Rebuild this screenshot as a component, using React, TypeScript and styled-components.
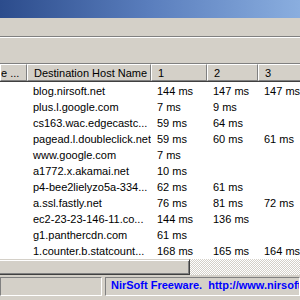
import React from "react";
import styled, { createGlobalStyle } from "styled-components";

const Global = createGlobalStyle`
  html, body { margin: 0; padding: 0; background: #d4d0c8; }
  body { width: 300px; height: 300px; overflow: hidden; }
  #root { width: 300px; height: 300px; }
`;

const Window = styled.div`
  width: 300px;
  height: 300px;
  display: flex;
  flex-direction: column;
  background: #d4d0c8;
  font-family: Tahoma, "Liberation Sans", Arial, sans-serif;
  font-size: 11px;
  color: #000;
  overflow: hidden;
`;

const TitleBar = styled.div`
  height: 18px;
  flex: none;
  background: linear-gradient(90deg, #2c4c8c 0%, #5a7ebd 50%, #8aaedf 100%);
`;

const MenuBar = styled.div`
  height: 18px;
  flex: none;
  border-bottom: 1px solid #808080;
  box-shadow: 0 1px 0 #ffffff;
  margin-bottom: 1px;
`;

const Toolbar = styled.div`
  height: 25px;
  flex: none;
`;

const ListView = styled.div`
  flex: none;
  border-top: 1px solid #808080;
  display: flex;
  flex-direction: column;
  background: #fff;
  overflow: hidden;
`;

const Header = styled.div`
  display: flex;
  height: 17px;
  background: #d4d0c8;
  flex: none;
`;

const HeaderCell = styled.div<{ $w: number; $pad?: number }>`
  flex: none;
  width: ${(p) => p.$w}px;
  box-sizing: border-box;
  height: 17px;
  padding-left: ${(p) => (p.$pad ?? 6)}px;
  line-height: 16px;
  white-space: nowrap;
  overflow: hidden;
  border-top: 1px solid #fff;
  border-left: 1px solid #fff;
  border-right: 1px solid #808080;
  border-bottom: 1px solid #808080;
  box-shadow: 1px 0 0 #404040, 0 1px 0 #404040;
`;

const Body = styled.div`
  padding-top: 2px;
  display: flex;
  flex-direction: column;
`;

const Row = styled.div`
  display: flex;
  height: 16px;
  line-height: 16px;
`;

const Cell = styled.div<{ $w: number }>`
  flex: none;
  width: ${(p) => p.$w}px;
  box-sizing: border-box;
  padding-left: 6px;
  white-space: nowrap;
  overflow: hidden;
`;

const ScrollBar = styled.div`
  height: 16px;
  flex: none;
  display: flex;
  background-color: #d4d0c8;
  background-image: conic-gradient(#ffffff 25%, #d4d0c8 0 50%, #ffffff 0 75%, #d4d0c8 0);
  background-size: 2px 2px;
`;

const Thumb = styled.div`
  width: 190px;
  box-sizing: border-box;
  background: #d4d0c8;
  border-top: 1px solid #d4d0c8;
  border-right: 1px solid #404040;
  border-bottom: 1px solid #404040;
  box-shadow: inset 0 1px 0 #fff, inset -1px -1px 0 #808080;
`;

const StatusBar = styled.div`
  flex: 1;
  display: flex;
  gap: 3px;
  padding-top: 2px;
`;

const StatusPanel = styled.div<{ $w?: number }>`
  ${(p) => (p.$w ? `width: ${p.$w}px; flex: none;` : "flex: 1;")}
  height: 19px;
  box-sizing: border-box;
  border-top: 1px solid #808080;
  border-left: 1px solid #808080;
  border-bottom: 1px solid #fff;
  border-right: 1px solid #fff;
  padding-left: 5px;
  line-height: 14px;
  white-space: nowrap;
  overflow: hidden;
`;

const StatusLink = styled.span`
  color: #0000ff;
  font-weight: bold;
`;

const widths = [27, 124, 56, 51, 60];

const rows: [string, string, string, string][] = [
  ["blog.nirsoft.net", "144 ms", "147 ms", "147 ms"],
  ["plus.l.google.com", "7 ms", "9 ms", ""],
  ["cs163.wac.edgecastc...", "59 ms", "64 ms", ""],
  ["pagead.l.doubleclick.net", "59 ms", "60 ms", "61 ms"],
  ["www.google.com", "7 ms", "", ""],
  ["a1772.x.akamai.net", "10 ms", "", ""],
  ["p4-bee2lielyzo5a-334...", "62 ms", "61 ms", ""],
  ["a.ssl.fastly.net", "76 ms", "81 ms", "72 ms"],
  ["ec2-23-23-146-11.co...", "144 ms", "136 ms", ""],
  ["g1.panthercdn.com", "61 ms", "", ""],
  ["1.counter.b.statcount...", "168 ms", "165 ms", "164 ms"],
];

export default function App() {
  return (
    <>
      <Global />
      <Window>
        <TitleBar />
        <MenuBar />
        <Toolbar />
        <ListView>
          <Header>
            <HeaderCell $w={widths[0]} $pad={0}>e ...</HeaderCell>
            <HeaderCell $w={widths[1]}>Destination Host Name</HeaderCell>
            <HeaderCell $w={widths[2]}>1</HeaderCell>
            <HeaderCell $w={widths[3]}>2</HeaderCell>
            <HeaderCell $w={widths[4]}>3</HeaderCell>
          </Header>
          <Body>
            {rows.map((r, i) => (
              <Row key={i}>
                <Cell $w={widths[0]} />
                <Cell $w={widths[1]}>{r[0]}</Cell>
                <Cell $w={widths[2]}>{r[1]}</Cell>
                <Cell $w={widths[3]}>{r[2]}</Cell>
                <Cell $w={widths[4]}>{r[3]}</Cell>
              </Row>
            ))}
          </Body>
        </ListView>
        <ScrollBar>
          <Thumb />
        </ScrollBar>
        <StatusBar>
          <StatusPanel $w={102} />
          <StatusPanel>
            <StatusLink>NirSoft Freeware.&nbsp; http://www.nirsoft.net</StatusLink>
          </StatusPanel>
        </StatusBar>
      </Window>
    </>
  );
}
